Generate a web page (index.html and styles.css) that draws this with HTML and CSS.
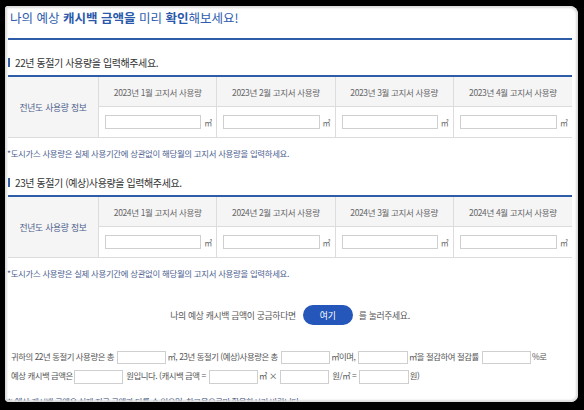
FILE: index.html
```html
<!DOCTYPE html>
<html lang="ko">
<head>
<meta charset="utf-8">
<title>캐시백 금액 확인</title>
<link rel="stylesheet" href="styles.css">
</head>
<body>
<div class="sheet">
  <div class="content">
    <h1 class="title">나의 예상 <b>캐시백 금액을</b> 미리 <b>확인</b>해보세요!</h1>

    <h2 class="heading">22년 동절기 사용량을 입력해주세요.</h2>
    <div class="usage">
      <div class="cell label">전년도 사용량 정보</div>
      <div class="cell head">2023년 1월 고지서 사용량</div>
      <div class="cell head">2023년 2월 고지서 사용량</div>
      <div class="cell head">2023년 3월 고지서 사용량</div>
      <div class="cell head last">2023년 4월 고지서 사용량</div>
      <div class="cell field"><input class="box" type="text"><span class="unit">㎥</span></div>
      <div class="cell field"><input class="box" type="text"><span class="unit">㎥</span></div>
      <div class="cell field"><input class="box" type="text"><span class="unit">㎥</span></div>
      <div class="cell field last"><input class="box" type="text"><span class="unit">㎥</span></div>
    </div>
    <p class="note">*도시가스 사용량은 실제 사용기간에 상관없이 해당월의 고지서 사용량을 입력하세요.</p>

    <h2 class="heading second">23년 동절기 (예상)사용량을 입력해주세요.</h2>
    <div class="usage">
      <div class="cell label">전년도 사용량 정보</div>
      <div class="cell head">2024년 1월 고지서 사용량</div>
      <div class="cell head">2024년 2월 고지서 사용량</div>
      <div class="cell head">2024년 3월 고지서 사용량</div>
      <div class="cell head last">2024년 4월 고지서 사용량</div>
      <div class="cell field"><input class="box" type="text"><span class="unit">㎥</span></div>
      <div class="cell field"><input class="box" type="text"><span class="unit">㎥</span></div>
      <div class="cell field"><input class="box" type="text"><span class="unit">㎥</span></div>
      <div class="cell field last"><input class="box" type="text"><span class="unit">㎥</span></div>
    </div>
    <p class="note">*도시가스 사용량은 실제 사용기간에 상관없이 해당월의 고지서 사용량을 입력하세요.</p>

    <div class="cta">
      <span>나의 예상 캐시백 금액이 궁금하다면</span>
      <button class="go" type="button">여기</button>
      <span>를 눌러주세요.</span>
    </div>

    <p class="result">귀하의 22년 동절기 사용량은 총 <input class="sm" type="text">㎥, 23년 동절기 (예상)사용량은 총 <input class="sm" type="text">㎥이며, <input class="sm" type="text">㎥을 절감하여 절감률 <input class="sm" type="text">%로<br>예상 캐시백 금액은<input class="sm" type="text"> 원입니다. (캐시백 금액 = <input class="sm" type="text">㎥ × <input class="sm" type="text"> 원/㎥ = <input class="sm" type="text">원)</p>
    <p class="fine">※ 예상 캐시백 금액은 실제 지급 금액과 다를 수 있으며, 참고용으로만 활용하시기 바랍니다.</p>
  </div>
</div>
</body>
</html>
```

FILE: styles.css
```css
* { box-sizing: border-box; }
html, body { margin: 0; padding: 0; }
body {
  background: #000;
  width: 584px;
  height: 410px;
  overflow: hidden;
  font-family: "Noto Sans CJK KR", "Noto Sans", sans-serif;
}
.sheet {
  position: relative;
  margin: 6px 0 0 5px;
  width: 573px;
  height: 396px;
  background: #fff;
  border-radius: 3px 8px 7px 4px;
  overflow: hidden;
}
.sheet::after {
  content: "";
  position: absolute;
  inset: 0;
  border-radius: inherit;
  box-shadow: inset 0 0 2px 2px #dcdcdc;
  pointer-events: none;
}
.content { padding: 0 6px 0 3px; }

.title {
  margin: 0;
  padding: 2px 0 10px 2px;
  font-size: 12.5px;
  line-height: 20px;
  font-weight: 400;
  letter-spacing: 0;
  color: #2d5cae;
  border-bottom: 2px solid #2f5ca6;
}
.title b { font-weight: 700; color: #2a58aa; }

.heading {
  display: flex;
  align-items: center;
  margin: 15px 0 6px;
  height: 14px;
  font-size: 10px;
  font-weight: 400;
  letter-spacing: -0.4px;
  color: #333;
}
.heading::before {
  content: "";
  width: 2px;
  height: 9px;
  margin-right: 5px;
  background: #2f5ca6;
}
.heading.second { margin-top: 16px; }

.usage {
  display: grid;
  grid-template-columns: 91px repeat(4, minmax(0, 1fr));
  grid-template-rows: 30px 30px;
  border-top: 2px solid #2f5ca6;
  border-bottom: 1px solid #dcdcdc;
}
.cell {
  display: flex;
  align-items: center;
  min-width: 0;
  border-right: 1px solid #dcdcdc;
}
.cell.last { border-right: 0; }
.label {
  grid-row: span 2;
  justify-content: center;
  background: #f5f5f6;
  font-size: 8.8px;
  letter-spacing: -0.25px;
  color: #4d5f8a;
}
.head {
  justify-content: center;
  background: #f5f5f6;
  border-bottom: 1px solid #dcdcdc;
  font-size: 8.5px;
  letter-spacing: -0.35px;
  color: #666;
  white-space: nowrap;
}
.field {
  gap: 3px;
  padding: 0 4px 0 6px;
}
.box {
  flex: 1;
  min-width: 0;
  width: 0;
  height: 14px;
  margin: 0;
  padding: 0;
  border: 1px solid #cfcfcf;
  background: #fff;
}
.unit {
  font-size: 8px;
  color: #666;
  width: 8px;
}

.note {
  margin: 9px 0 0 -1px;
  font-size: 8.4px;
  line-height: 12px;
  letter-spacing: -0.28px;
  color: #4d6190;
  white-space: nowrap;
}

.cta {
  display: flex;
  align-items: center;
  justify-content: center;
  gap: 6px;
  margin-top: 26px;
  height: 20px;
  font-size: 8.8px;
  letter-spacing: -0.3px;
  color: #555;
}
.go {
  width: 50px;
  height: 20px;
  margin: 0 0 0 1px;
  padding: 0;
  border: 0;
  border-radius: 10px;
  background: #2457b9;
  color: #fff;
  font-family: inherit;
  font-size: 8.8px;
}

.result {
  margin: 22px 0 0 3px;
  font-size: 8.4px;
  line-height: 19.3px;
  letter-spacing: -0.45px;
  color: #555;
  white-space: nowrap;
}
.sm {
  width: 49.5px;
  height: 13.5px;
  margin: 0 1px;
  padding: 0;
  border: 1px solid #cfcfcf;
  vertical-align: middle;
  background: #fff;
}
.fine {
  margin: 9px 0 0 -3px;
  font-size: 8.4px;
  line-height: 12px;
  letter-spacing: -0.45px;
  color: #2b3f6e;
  white-space: nowrap;
}
```
